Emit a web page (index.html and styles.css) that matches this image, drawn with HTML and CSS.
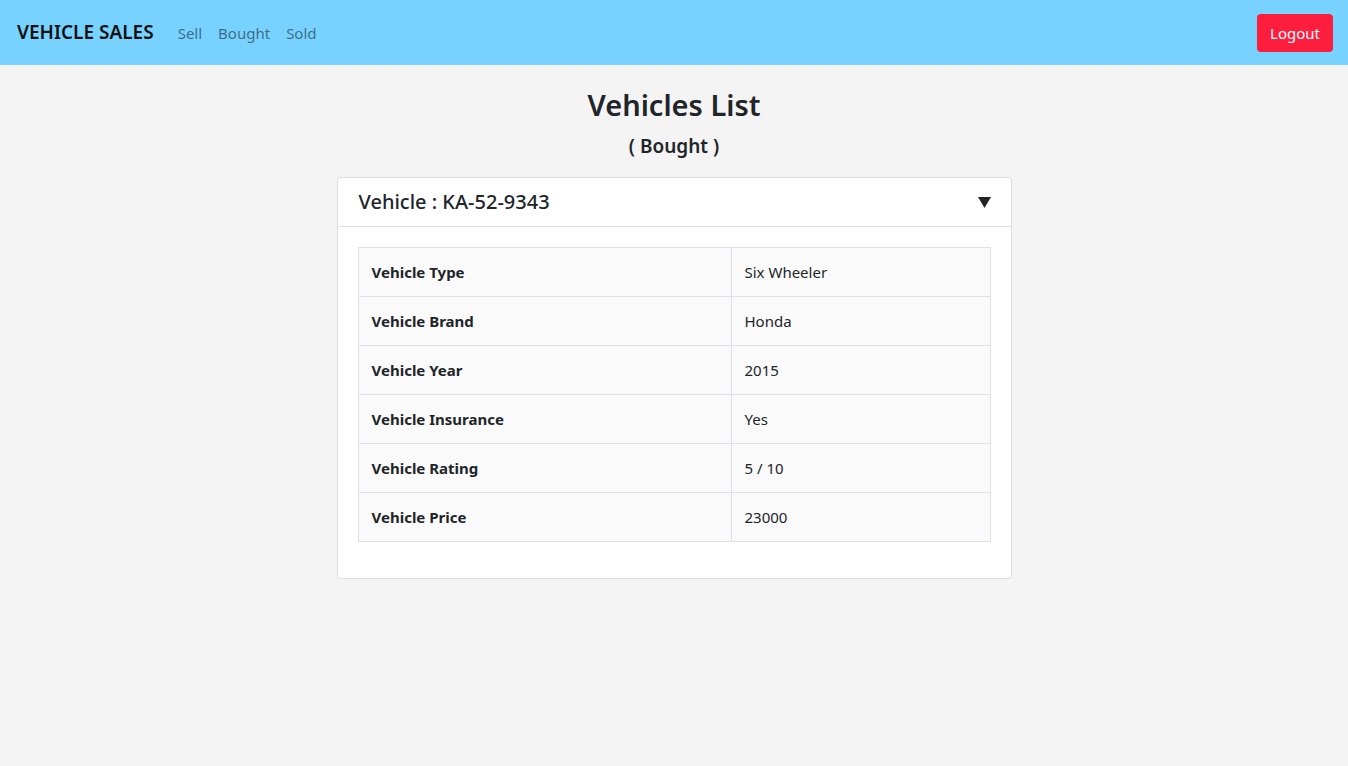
FILE: index.html
```html
<!DOCTYPE html>
<html lang="en">
<head>
<meta charset="utf-8">
<title>Vehicle Sales</title>
<link rel="stylesheet" href="styles.css">
</head>
<body>
<nav class="navbar">
  <div class="nav-left">
    <span class="brand">VEHICLE SALES</span>
    <ul class="nav-links">
      <li><a href="#">Sell</a></li>
      <li><a href="#">Bought</a></li>
      <li><a href="#">Sold</a></li>
    </ul>
  </div>
  <button class="btn-logout">Logout</button>
</nav>
<main class="content">
  <h1 class="title">Vehicles List</h1>
  <h2 class="subtitle">( Bought )</h2>
  <section class="card">
    <div class="card-header">
      <span class="card-title">Vehicle : KA-52-9343</span>
      <svg class="caret" width="13" height="11" viewBox="0 0 13 11"><polygon points="0,0 13,0 6.5,11" fill="#212529"/></svg>
    </div>
    <div class="card-body">
      <table class="details">
        <tr><th>Vehicle Type</th><td>Six Wheeler</td></tr>
        <tr><th>Vehicle Brand</th><td>Honda</td></tr>
        <tr><th>Vehicle Year</th><td>2015</td></tr>
        <tr><th>Vehicle Insurance</th><td>Yes</td></tr>
        <tr><th>Vehicle Rating</th><td>5 / 10</td></tr>
        <tr><th>Vehicle Price</th><td>23000</td></tr>
      </table>
    </div>
  </section>
</main>
</body>
</html>
```

FILE: styles.css
```css
* { box-sizing: border-box; }
html, body { margin: 0; padding: 0; }
body {
  background: #f4f4f4;
  color: #212529;
  font-family: "Noto Sans", "Open Sans", sans-serif;
  font-size: 15px;
  line-height: 1.5;
}
.navbar {
  height: 65px;
  background: #77d2ff;
  display: flex;
  align-items: center;
  justify-content: space-between;
  padding: 0 15px 0 17px;
}
.nav-left { display: flex; align-items: center; }
.brand {
  font-size: 19px;
  font-weight: 600;
  color: #111;
  margin-right: 24px;
}
.nav-links {
  list-style: none;
  margin: 2px 0 0;
  padding: 0;
  display: flex;
  gap: 16px;
}
.nav-links a {
  color: rgba(0,0,0,0.5);
  text-decoration: none;
  font-size: 15px;
}
.btn-logout {
  background: #fd1e3d;
  color: #fff;
  border: none;
  border-radius: 4px;
  height: 38px;
  padding: 0 13px;
  font-family: inherit;
  font-size: 15px;
}
.content {
  display: flex;
  flex-direction: column;
  align-items: center;
  padding-top: 21px;
}
.title {
  margin: 0;
  font-size: 29px;
  font-weight: 600;
  line-height: 1.3;
}
.subtitle {
  margin: 10px 0 19px;
  font-size: 19px;
  font-weight: 600;
  line-height: 1.3;
}
.card {
  width: 675px;
  background: #fff;
  border: 1px solid rgba(0,0,0,0.125);
  border-radius: 4px;
}
.card-header {
  height: 49px;
  display: flex;
  align-items: center;
  justify-content: space-between;
  padding: 0 20px 0 21px;
  border-bottom: 1px solid rgba(0,0,0,0.125);
}
.card-title { font-size: 20px; font-weight: 500; }
.card-body { padding: 20px 20px 20px; }
.details {
  width: 100%;
  border-collapse: collapse;
  background: #fafafa;
  margin-bottom: 16px;
}
.details th, .details td {
  border: 1px solid #dee2e6;
  padding: 12px 12px 12px 13px;
  height: 49px;
  text-align: left;
  font-size: 15px;
}
.details th { width: 373px; font-weight: 700; }
.details td { font-weight: 400; }
```
